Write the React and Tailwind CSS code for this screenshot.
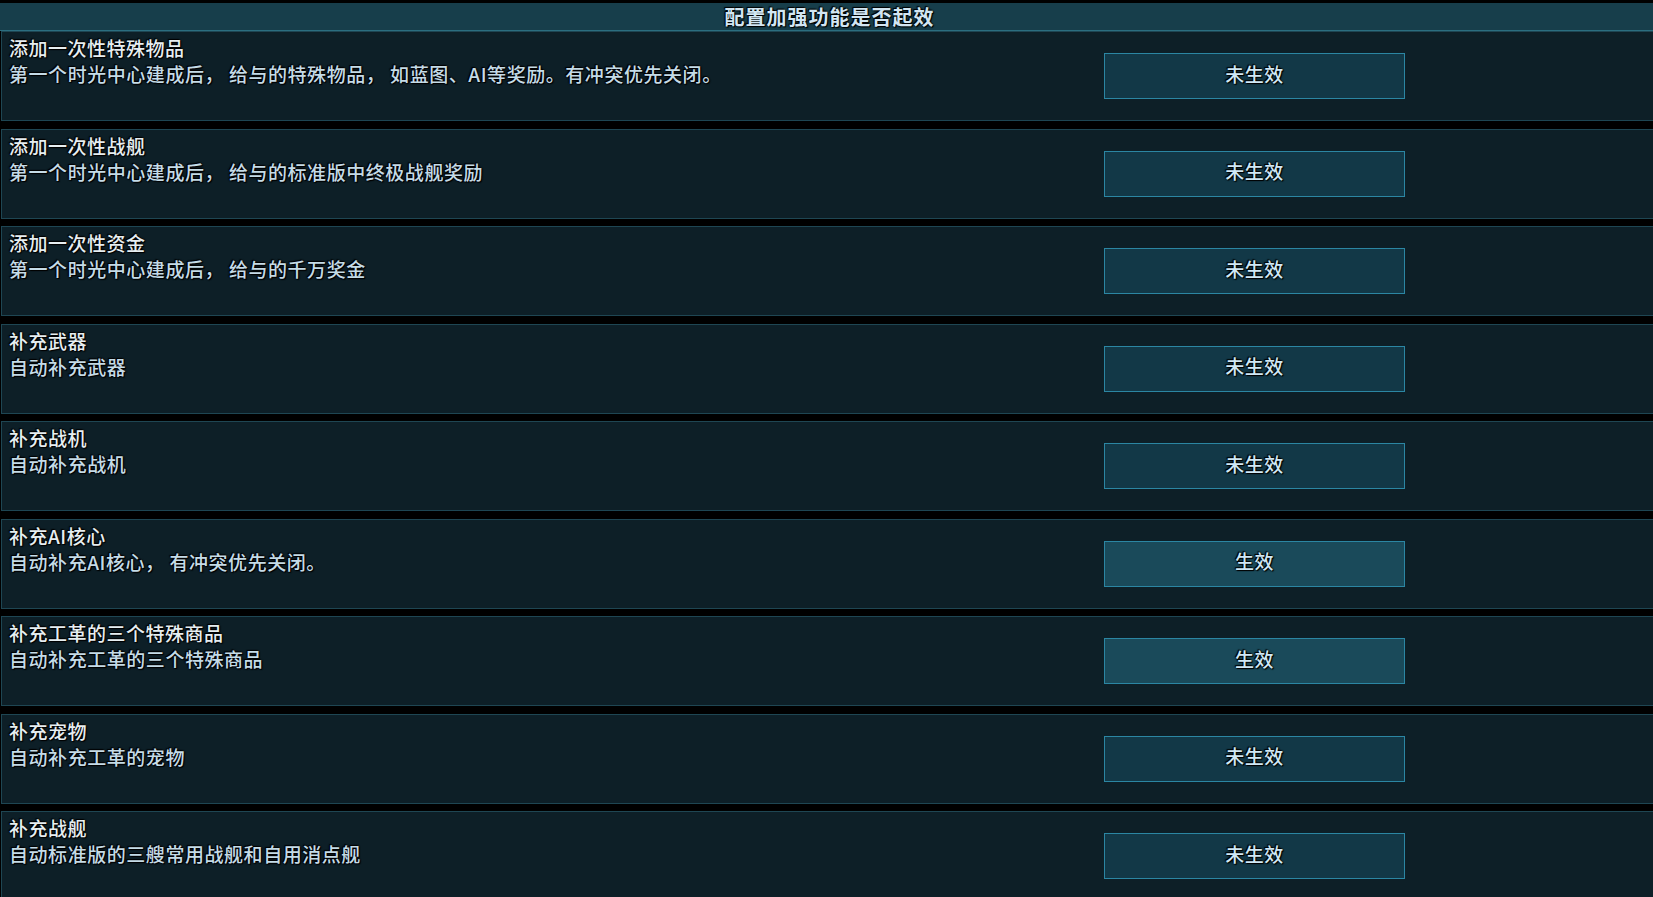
import React from "react";

const rows = [
  { t: "添加一次性特殊物品", d: "第一个时光中心建成后， 给与的特殊物品， 如蓝图、AI等奖励。有冲突优先关闭。", on: false },
  { t: "添加一次性战舰", d: "第一个时光中心建成后， 给与的标准版中终极战舰奖励", on: false },
  { t: "添加一次性资金", d: "第一个时光中心建成后， 给与的千万奖金", on: false },
  { t: "补充武器", d: "自动补充武器", on: false },
  { t: "补充战机", d: "自动补充战机", on: false },
  { t: "补充AI核心", d: "自动补充AI核心， 有冲突优先关闭。", on: true },
  { t: "补充工革的三个特殊商品", d: "自动补充工革的三个特殊商品", on: true },
  { t: "补充宠物", d: "自动补充工革的宠物", on: false },
  { t: "补充战舰", d: "自动标准版的三艘常用战舰和自用消点舰", on: false },
];

const outline = "[text-shadow:0_0_1px_#000,0_0_2px_#000,1px_1px_1px_#000,-1px_-1px_1px_#000]";

export default function App() {
  return (
    <div className="w-[1653px] h-[897px] overflow-hidden bg-black pt-[3px] font-['Noto_Sans_CJK_SC','Noto_Sans',sans-serif]">
      <div className="h-[28px] bg-[#173e4b] border-b border-[#2b6e80] flex items-center justify-center pl-[6px]">
        <span className={`text-[20px] leading-[27px] tracking-[1px] font-bold text-[#d2e6f3] ${outline}`}>
          配置加强功能是否起效
        </span>
      </div>
      <div className="flex flex-col gap-[7.5px] pl-[1px]">
        {rows.map((r, i) => (
          <div
            key={i}
            className="h-[90px] shrink-0 flex bg-[#0d1f27] border-l border-t border-b border-[#1e4653]"
          >
            <div className="flex-1 pl-[7px] pt-[3px]">
              <div className={`text-[19px] leading-[26px] tracking-[0.5px] font-medium text-[#e6eef1] ${outline}`}>
                {r.t}
              </div>
              <div className={`text-[19px] leading-[26px] tracking-[0.55px] font-medium text-[#c4dbe7] ${outline}`}>
                {r.d}
              </div>
            </div>
            <div className="self-center mr-[248px] w-[301px] h-[46px] flex items-center justify-center border border-[#2b86a3] bg-[#123847] data-[on=true]:bg-[#1a4a5a]" data-on={r.on ? "true" : "false"}>
              <span className={`text-[19px] leading-[26px] tracking-[0.5px] font-medium text-[#cfe8f6] -mt-[5px] ${outline}`}>
                {r.on ? "生效" : "未生效"}
              </span>
            </div>
          </div>
        ))}
      </div>
    </div>
  );
}
